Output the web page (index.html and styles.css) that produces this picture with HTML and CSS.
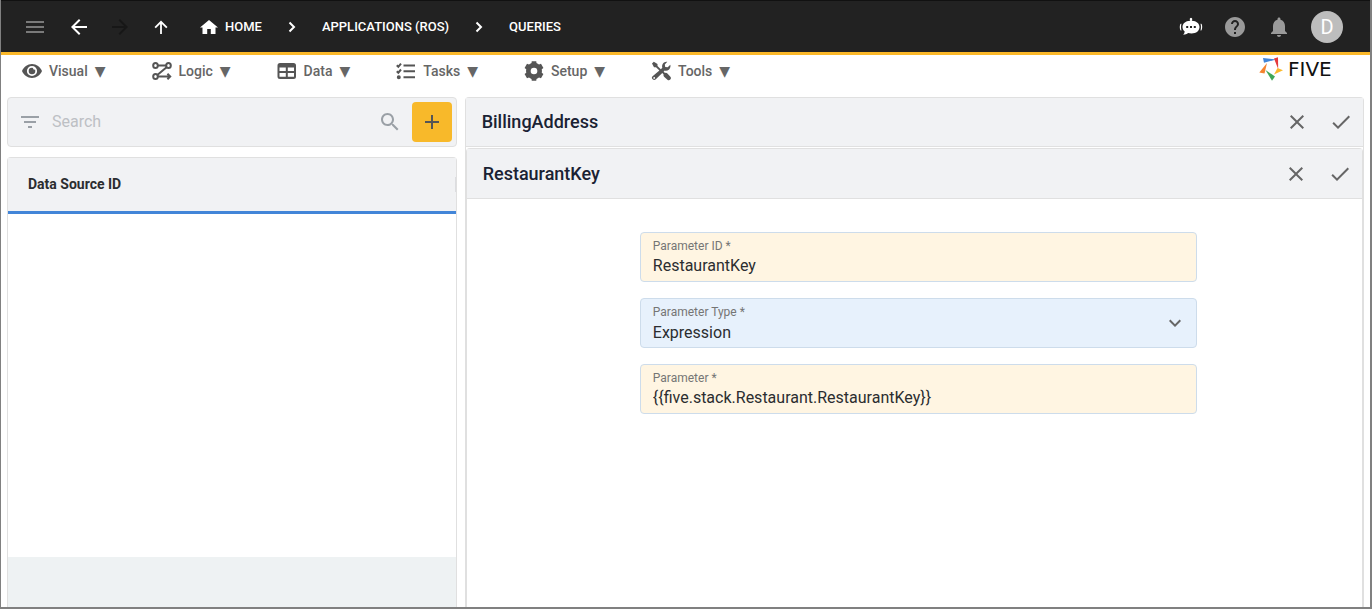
FILE: index.html
```html
<!DOCTYPE html>
<html lang="en">
<head>
<meta charset="utf-8">
<title>Five - Queries</title>
<link rel="stylesheet" href="styles.css">
</head>
<body>
<div class="window">
  <header class="topbar">
    <div class="nav-buttons">
      <button class="icon-button muted" aria-label="Menu"><svg viewBox="0 0 24 24"><path d="M3 18h18v-2H3v2zm0-5h18v-2H3v2zm0-7v2h18V6H3z"/></svg></button>
      <button class="icon-button" aria-label="Back"><svg viewBox="0 0 24 24"><path d="M20 11H7.830l5.590-5.590L12 4l-8 8 8 8 1.410-1.410L7.830 13H20v-2z"/></svg></button>
      <button class="icon-button disabled" aria-label="Forward" disabled><svg viewBox="0 0 24 24"><path d="m12 4-1.410 1.410L16.170 11H4v2h12.170l-5.580 5.590L12 20l8-8z"/></svg></button>
      <button class="icon-button" aria-label="Up"><svg viewBox="0 0 24 24"><path d="m5.500 12 1.300 1.300 4.300-4.300V19h1.800V9l4.300 4.300 1.300-1.300L12 5.500z"/></svg></button>
    </div>
    <nav class="breadcrumbs" aria-label="Breadcrumb">
      <a href="#" class="home"><svg viewBox="0 0 20 20"><path d="M8.200 17v-5h3.600v5h4.700v-6.500H19L10 3 1 10.500h2.500V17z"/></svg>HOME</a>
      <svg class="separator" viewBox="0 0 24 24"><path d="M9.500 7.500l4.500 4.500-4.500 4.500"/></svg>
      <a href="#">APPLICATIONS (ROS)</a>
      <svg class="separator" viewBox="0 0 24 24"><path d="M9.500 7.500l4.500 4.500-4.500 4.500"/></svg>
      <a href="#">QUERIES</a>
    </nav>
    <div class="actions">
      <button class="icon-button" aria-label="Assistant"><svg viewBox="0 0 24 24"><path fill-rule="evenodd" d="M11.100 5.700V5.100a1.300 1.300 0 1 1 1.800 0v.6c4.700.3 7.600 2.700 7.600 6.400 0 3.800-3.200 6.400-8 6.400-1.200 0-2.400-.2-3.400-.5-1.300 1-2.900 1.600-4.900 1.800.9-1 1.400-2.100 1.500-3.200C4.200 15.500 3.500 14 3.500 12.100c0-3.700 2.900-6.100 7.600-6.400zM7.200 11v2h2v-2zm3.800 0v2h2v-2zm3.800 0v2h2v-2zM2.500 8.800c-.6 2.100-.6 4.500 0 6.600h-.8c-1.200-.8-1.200-5.800 0-6.600zM21.500 8.800c.6 2.100.6 4.500 0 6.600h.8c1.200-.8 1.200-5.800 0-6.600z"/></svg></button>
      <button class="icon-button gray" aria-label="Help"><svg viewBox="0 0 24 24"><path d="M12 2C6.480 2 2 6.480 2 12s4.480 10 10 10 10-4.480 10-10S17.520 2 12 2zm1 17h-2v-2h2v2zm2.070-7.750-.9.920C13.450 12.900 13 13.500 13 15h-2v-.5c0-1.100.45-2.100 1.170-2.830l1.240-1.260c.37-.36.59-.86.59-1.410 0-1.100-.9-2-2-2s-2 .9-2 2H8c0-2.210 1.790-4 4-4s4 1.790 4 4c0 .88-.36 1.680-.93 2.250z"/></svg></button>
      <button class="icon-button gray" aria-label="Notifications"><svg viewBox="0 0 24 24"><path d="M12 22c1.100 0 2-.9 2-2h-4c0 1.100.9 2 2 2zm6-6v-5c0-3.070-1.640-5.640-4.500-6.320V4c0-.83-.67-1.500-1.500-1.500s-1.500.67-1.500 1.500v.68C7.630 5.360 6 7.920 6 11v5l-2 2v1h16v-1l-2-2z"/></svg></button>
      <button class="avatar" aria-label="Account">D</button>
    </div>
  </header>

  <div class="menubar">
    <nav class="menus" aria-label="Main">
      <button class="menu"><svg viewBox="0 0 20 20"><path fill-rule="evenodd" d="M10 3C5.500 3 1.700 5.900 0 10c1.700 4.100 5.500 7 10 7s8.300-2.900 10-7c-1.700-4.100-5.500-7-10-7zm0 1.900a5.100 5.100 0 1 1 0 10.200 5.100 5.100 0 0 1 0-10.200zm0 1.800a3.300 3.300 0 1 0 3.300 3.300c0-.5-.1-1-.3-1.400a1.700 1.700 0 0 1-2-1.700A3.300 3.300 0 0 0 10 6.700z"/></svg>Visual<span class="caret">▼</span></button>
      <button class="menu"><svg class="lined" viewBox="0 0 20 20"><ellipse cx="3.500" cy="4.500" rx="2.300" ry="2.600"/><ellipse cx="16.500" cy="4.500" rx="2.300" ry="2.600"/><ellipse cx="3.500" cy="15.500" rx="2.300" ry="2.600"/><path d="M6 4.500h8M14.600 6.300 5.600 13.700M6 15.500h12M15.400 12.700l2.800 2.800-2.800 2.700"/></svg>Logic<span class="caret">▼</span></button>
      <button class="menu"><svg viewBox="0 0 20 20"><path fill-rule="evenodd" d="M3 2h13.500A2.500 2.500 0 0 1 19 4.500v11a2.500 2.500 0 0 1-2.500 2.500H3A2.500 2.500 0 0 1 .5 15.500v-11A2.500 2.500 0 0 1 3 2zM2.500 6.500V10h6.300V6.500zm8.300 0V10h6.200V6.500zM2.500 12v3.800h6.300V12zm8.300 0v3.800h6.200V12z"/></svg>Data<span class="caret">▼</span></button>
      <button class="menu"><svg class="lined" viewBox="0 0 20 20"><path d="M7.500 4.500H19M7.500 10.300H19M7.500 16.200H19M.8 4.300l1.500 1.500L5 2.600M.8 10.200l1.500 1.500L5 8.500"/><circle class="solid" cx="2.800" cy="16.200" r="1"/></svg>Tasks<span class="caret">▼</span></button>
      <button class="menu"><svg viewBox="0 0 24 24"><path d="M21.300 14.200a9.800 9.800 0 0 0 0-4.400l2-1.500-2.900-5.100-2.400 1a9.600 9.600 0 0 0-3-1.800L14.700.3H9.300L9 2.400a9.600 9.600 0 0 0-3 1.800l-2.400-1L.7 8.300l2 1.500a9.800 9.800 0 0 0 0 4.400l-2 1.500 2.900 5.100 2.400-1a9.600 9.600 0 0 0 3 1.800l.3 2.100h5.400l.3-2.100a9.600 9.600 0 0 0 3-1.800l2.400 1 2.900-5.100zM12 16a4 4 0 1 1 0-8 4 4 0 0 1 0 8z"/></svg>Setup<span class="caret">▼</span></button>
      <button class="menu"><svg viewBox="0 0 20 20"><path fill-rule="evenodd" d="M1 2.600 2.800.8 6.500 3v2l3.300 3.300 1.500-1.500c-.6-2 .1-4.200 1.700-5.300A5 5 0 0 1 16.300.8L13.800 3.400l.4 2.500 2.500.4 2.600-2.600c.5 2-.1 3.800-1.500 5-1.100 1-2.600 1.300-4.100.9l-1.100 1.100 1.500 1.200c.8-.3 1.700-.1 2.300.5l3 3.300c.8.9.7 2.100-.1 2.900s-2 .9-2.900.1l-3.300-3c-.6-.6-.8-1.500-.5-2.300l-1.300-1.500-6.500 6.400a2.200 2.200 0 0 1-3.200-3.100L8.400 9.500 5 6.200H3zM3.200 16a.9.900 0 1 0 0 1.800.9.900 0 0 0 0-1.800z"/></svg>Tools<span class="caret">▼</span></button>
    </nav>
    <div class="brand">
      <svg viewBox="0 0 24 24"><path fill="#4285d8" d="M4 1l13 1.500L5 5.800z"/><path fill="#e5393c" d="M15 1.500 19 .2l.2 11.800z"/><path fill="#fbb829" d="M15 17.500 18.500 11l5.500 2.200z"/><path fill="#3fa757" d="M6.500 13 16 19.500l-3 4.300z"/><path fill="#f5832f" d="M8 6 5.500 16.500.3 15.500z"/></svg>
      <span>FIVE</span>
    </div>
  </div>

  <main class="workspace">
    <section class="list-pane">
      <div class="searchbar">
        <svg class="filter" viewBox="0 0 24 24"><path d="M10 18h4v-2h-4v2zM3 6v2h18V6H3zm3 7h12v-2H6v2z"/></svg>
        <input type="search" aria-label="Search" placeholder="Search">
        <button class="search-button" aria-label="Search"><svg viewBox="0 0 24 24"><path d="M15.500 14h-.79l-.28-.27C15.410 12.590 16 11.110 16 9.500 16 5.910 13.090 3 9.500 3S3 5.910 3 9.500 5.910 16 9.500 16c1.610 0 3.090-.59 4.230-1.570l.27.28v.79l5 4.990L20.490 19l-4.990-5zm-6 0C7.010 14 5 11.990 5 9.500S7.010 5 9.500 5 14 7.010 14 9.500 11.990 14 9.500 14z"/></svg></button>
        <button class="add-button" aria-label="Add"><svg viewBox="0 0 24 24"><path d="M19 13h-6v6h-2v-6H5v-2h6V5h2v6h6v2z"/></svg></button>
      </div>
      <div class="list">
        <table>
          <thead><tr><th scope="col"><div class="column-head">Data Source ID</div></th></tr></thead>
          <tbody></tbody>
        </table>
        <div class="list-footer"></div>
      </div>
    </section>

    <section class="detail-pane">
      <div class="pane-head">
        <h1>BillingAddress</h1>
        <button class="icon-button" aria-label="Cancel"><svg viewBox="0 0 24 24"><path d="M19 6.410 17.590 5 12 10.590 6.410 5 5 6.410 10.590 12 5 17.590 6.410 19 12 13.410 17.590 19 19 17.590 13.410 12z"/></svg></button>
        <button class="icon-button" aria-label="Save"><svg viewBox="0 0 24 24"><path d="M9 16.170 4.830 12l-1.420 1.410L9 19 21 7l-1.410-1.410z"/></svg></button>
      </div>
      <section class="sub-pane">
        <div class="pane-head">
          <h2>RestaurantKey</h2>
          <button class="icon-button" aria-label="Cancel"><svg viewBox="0 0 24 24"><path d="M19 6.410 17.590 5 12 10.590 6.410 5 5 6.410 10.590 12 5 17.590 6.410 19 12 13.410 17.590 19 19 17.590 13.410 12z"/></svg></button>
          <button class="icon-button" aria-label="Save"><svg viewBox="0 0 24 24"><path d="M9 16.170 4.830 12l-1.420 1.410L9 19 21 7l-1.410-1.410z"/></svg></button>
        </div>
        <form class="form">
          <div class="field required">
            <label for="parameter-id">Parameter ID *</label>
            <input id="parameter-id" type="text" value="RestaurantKey">
          </div>
          <div class="field choice">
            <label for="parameter-type">Parameter Type *</label>
            <select id="parameter-type"><option>Expression</option></select>
            <svg viewBox="0 0 24 24"><path d="M7.410 8.590 12 13.170l4.590-4.580L18 10l-6 6-6-6z"/></svg>
          </div>
          <div class="field required">
            <label for="parameter">Parameter *</label>
            <input id="parameter" type="text" value="{{five.stack.Restaurant.RestaurantKey}}">
          </div>
        </form>
      </section>
    </section>
  </main>
</div>
</body>
</html>
```

FILE: styles.css
```css
* {
  box-sizing: border-box;
}

body {
  margin: 0;
  font-family: Roboto, "Liberation Sans", sans-serif;
  font-size: 14px;
  color: #2b2d30;
}

button {
  padding: 0;
  border: 0;
  background: none;
  font: inherit;
  color: inherit;
  cursor: pointer;
}

svg {
  display: block;
  flex: none;
  fill: currentColor;
}

.window {
  display: flex;
  flex-direction: column;
  min-height: 100vh;
  border: solid #808080;
  border-width: 0 2px 2px 1px;
  background: #fff;
}

/* Top bar */

.topbar {
  display: flex;
  align-items: center;
  height: 55px;
  padding: 0 27px 0 22px;
  border-top: 1px solid #111;
  border-bottom: 3px solid #fbb829;
  background: #222;
  color: #fff;
}

.nav-buttons {
  display: flex;
  gap: 17px;
}

.icon-button svg {
  width: 24px;
  height: 24px;
}

.muted {
  margin-right: 3px;
  color: #7a7a7a;
}

.icon-button.disabled {
  color: #171717;
}

.gray {
  color: #9a9a9a;
}

.breadcrumbs {
  display: flex;
  align-items: center;
  gap: 18px;
  margin-left: 26px;
  font-size: 13px;
  font-weight: 500;
}

.breadcrumbs a {
  color: #fff;
  text-decoration: none;
}

.home {
  display: flex;
  align-items: center;
  gap: 6px;
}

.home svg {
  width: 20px;
  height: 20px;
}

.separator {
  width: 24px;
  height: 24px;
  fill: none;
  stroke: #fff;
  stroke-width: 2;
}

.actions {
  display: flex;
  align-items: center;
  gap: 20px;
  margin-left: auto;
}

.avatar {
  width: 32px;
  height: 32px;
  border-radius: 50%;
  background: #bdbdbd;
  font-size: 20px;
}

/* Menu bar */

.menubar {
  display: flex;
  justify-content: space-between;
  height: 42px;
  padding: 0 23px 0 21px;
}

.menus {
  display: flex;
  align-items: center;
  gap: 46px;
  height: 32px;
}

.menu {
  display: flex;
  align-items: center;
  gap: 7px;
  font-weight: 500;
  line-height: 18px;
  color: #666;
}

.menu svg {
  width: 20px;
  height: 20px;
  color: #555;
}

.menu .lined {
  fill: none;
  stroke: currentColor;
  stroke-width: 2;
}

.menu .solid {
  fill: currentColor;
}

.caret {
  font-family: "DejaVu Sans", sans-serif;
  font-weight: 400;
  line-height: 16px;
}

.brand {
  display: flex;
  align-items: center;
  gap: 5px;
  width: 88px;
  height: 28px;
  font-family: "DejaVu Sans", sans-serif;
  font-size: 20px;
  color: #111;
}

.brand svg {
  width: 24px;
  height: 24px;
}

/* Workspace */

.workspace {
  flex: 1;
  display: grid;
  grid-template-columns: 1fr 2fr;
  gap: 8px;
  padding: 0 6px;
}

.list-pane {
  display: flex;
  flex-direction: column;
  gap: 10px;
}

.searchbar {
  display: flex;
  align-items: center;
  height: 50px;
  padding: 0 4px 0 10px;
  border: 1px solid #e0e0e0;
  border-radius: 4px;
  background: #f1f2f4;
  color: #9aa0a6;
}

.searchbar svg {
  width: 24px;
  height: 24px;
}

.searchbar input {
  flex: 1;
  min-width: 0;
  padding: 0 10px 2px;
  border: 0;
  outline: 0;
  background: none;
  font: inherit;
  font-size: 16px;
}

.searchbar input::placeholder {
  color: #bdc0c4;
}

.searchbar .add-button {
  display: grid;
  place-items: center;
  width: 40px;
  height: 40px;
  margin-left: 10px;
  border-radius: 4px;
  background: #f8b92a;
  color: #555;
}

.list {
  flex: 1;
  display: flex;
  flex-direction: column;
  justify-content: space-between;
  border: 1px solid #e0e0e0;
  border-bottom: 0;
  border-radius: 4px 4px 0 0;
}

.list table {
  width: 100%;
  border-spacing: 0;
}

.list th {
  padding: 0;
  border-bottom: 3px solid #4285d8;
  background: #f1f2f4;
  font-weight: 700;
  text-align: left;
}

.column-head {
  margin: 19px 0;
  padding-left: 20px;
  border-right: 1px solid #dcdde0;
  line-height: 15px;
}

.list-footer {
  height: 50px;
  background: #eef2f3;
}

.detail-pane {
  display: flex;
  flex-direction: column;
  border: 1px solid #e0e0e0;
  border-bottom: 0;
  border-radius: 4px 4px 0 0;
}

.pane-head {
  display: flex;
  align-items: center;
  gap: 20px;
  height: 49px;
  padding: 0 10px 0 16px;
  border-bottom: 1px solid #e0e0e0;
  background: #f1f2f4;
  color: #666;
}

.pane-head h1,
.pane-head h2 {
  flex: 1;
  margin: 0;
  font-size: 18px;
  font-weight: 500;
  line-height: 22px;
  color: #1a2233;
}

.sub-pane {
  flex: 1;
  margin-top: 1px;
  border: 1px solid #e0e0e0;
  border-bottom: 0;
  border-radius: 4px 4px 0 0;
}

.sub-pane .pane-head {
  height: 50px;
}

.form {
  display: flex;
  flex-direction: column;
  align-items: center;
  gap: 16px;
  padding: 33px 16px 16px 24px;
}

.field {
  position: relative;
  width: 100%;
  max-width: 557px;
  height: 50px;
  padding: 5px 12px;
  border: 1px solid #cddceb;
  border-radius: 4px;
}

.required {
  background: #fff5e2;
}

.choice {
  background: #e7f1fc;
}

.field label {
  display: block;
  font-size: 12px;
  line-height: 16px;
  color: #757575;
}

.field input,
.field select {
  display: block;
  width: 100%;
  height: 24px;
  padding: 0;
  border: 0;
  outline: 0;
  appearance: none;
  background: none;
  font: inherit;
  font-size: 16px;
  color: #2b2d30;
}

.field input {
  height: 22px;
}

.field svg {
  position: absolute;
  top: 12px;
  right: 9px;
  width: 24px;
  height: 24px;
  color: #666;
  pointer-events: none;
}
```
